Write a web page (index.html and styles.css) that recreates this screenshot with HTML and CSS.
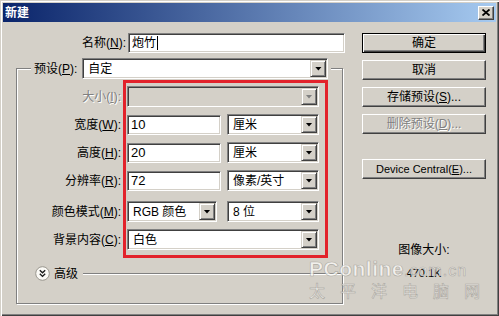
FILE: index.html
```html
<!DOCTYPE html>
<html>
<head>
    <title>新建</title>
    <link rel="stylesheet" href="styles.css">
</head>
<body>
    <div class="window">
        <div class="titlebar">
            <span class="title">新建</span>
            <span class="close">
                <svg viewBox="0 0 8 7" width="8" height="7"><path d="M0.5 0.5 L7.5 6.5 M7.5 0.5 L0.5 6.5" stroke="#000" stroke-width="1.8" fill="none"/></svg>
            </span>
        </div>
        <div class="main">
            <div class="left">
                <div class="name-row">
                    <span class="label name-label">名称(<u>N</u>):</span>
                    <div class="field name-field">炮竹<span class="caret"></span></div>
                </div>
                <fieldset class="group">
                    <legend class="preset">
                        <span class="label">预设(<u>P</u>):</span>
                        <div class="select preset-select"><span class="value">自定</span><span class="drop"></span></div>
                    </legend>
                    <div class="rows">
                        <span class="label disabled">大小(<u>I</u>):</span>
                        <div class="controls">
                            <div class="select full off"><span class="value"></span><span class="drop"></span></div>
                        </div>

                        <span class="label">宽度(<u>W</u>):</span>
                        <div class="controls">
                            <div class="field num">10</div>
                            <div class="select unit"><span class="value">厘米</span><span class="drop"></span></div>
                        </div>

                        <span class="label">高度(<u>H</u>):</span>
                        <div class="controls">
                            <div class="field num">20</div>
                            <div class="select unit"><span class="value">厘米</span><span class="drop"></span></div>
                        </div>

                        <span class="label">分辨率(<u>R</u>):</span>
                        <div class="controls">
                            <div class="field num">72</div>
                            <div class="select unit"><span class="value">像素/英寸</span><span class="drop"></span></div>
                        </div>

                        <span class="label gap-top">颜色模式(<u>M</u>):</span>
                        <div class="controls gap-top">
                            <div class="select mode"><span class="value">RGB 颜色</span><span class="drop"></span></div>
                            <div class="select unit"><span class="value">8 位</span><span class="drop"></span></div>
                        </div>

                        <span class="label">背景内容(<u>C</u>):</span>
                        <div class="controls">
                            <div class="select full"><span class="value">白色</span><span class="drop"></span></div>
                        </div>
                    </div>
                    <div class="advanced">
                        <svg class="adv-icon" viewBox="0 0 15 15" width="15" height="15">
                            <circle cx="7.5" cy="7.5" r="6.8" fill="#fbfaf6" stroke="#9a978f"/>
                            <path d="M4.8 4.2 L7.5 6.8 L10.2 4.2 M4.8 7.8 L7.5 10.4 L10.2 7.8" stroke="#1a1a1a" stroke-width="1.4" fill="none"/>
                        </svg>
                        <span class="adv-text">高级</span>
                        <span class="adv-line"></span>
                    </div>
                </fieldset>
            </div>
            <div class="right">
                <button class="btn default">确定</button>
                <button class="btn">取消</button>
                <button class="btn">存储预设(<u>S</u>)...</button>
                <button class="btn off">删除预设(<u>D</u>)...</button>
                <button class="btn latin device">Device Central(<u>E</u>)...</button>
                <div class="size-info">
                    <div class="size-title">图像大小:</div>
                    <div class="size-value">470.1K</div>
                </div>
            </div>
        </div>
        <!-- annotation drawn over the screenshot -->
        <div class="highlight"></div>
        <div class="watermark">
            <div class="wm-top">PConline<span class="wm-small">.com.cn</span></div>
            <div class="wm-bottom">太平洋电脑网</div>
        </div>
    </div>
</body>
</html>
```

FILE: styles.css
```css
body { margin: 0; font-family: "Liberation Sans", "Noto Sans CJK SC", sans-serif; font-size: 12px; color: #000; }
.window { position: relative; width: 499px; height: 316px; box-sizing: border-box; padding: 3px; background: #d4d0c8; box-shadow: inset 1px 1px #d4d0c8, inset 2px 2px #fff, inset -1px -1px #404040, inset -2px -2px #808080; overflow: hidden; }
.titlebar { height: 19px; display: flex; align-items: center; justify-content: space-between; background: linear-gradient(to right, #0a246a, #a6caf0); }
.title { color: #fff; font-weight: bold; padding-left: 2px; line-height: 14px; }
.close { width: 16px; height: 14px; margin-right: 2px; box-sizing: border-box; background: #d4d0c8; border: 1px solid; border-color: #fff #404040 #404040 #fff; box-shadow: inset -1px -1px #808080; display: flex; align-items: center; justify-content: center; }

.main { display: flex; padding-top: 11px; }
.left { width: 342px; }
.right { width: 124px; margin-left: 17px; display: flex; flex-direction: column; gap: 7px; }

.label { line-height: 14px; white-space: nowrap; }
.label u, .btn u { text-underline-offset: 1px; }
.disabled { color: #808080; text-shadow: 1px 1px #fff; }

.name-row { display: flex; align-items: center; }
.name-label { width: 123px; text-align: right; margin-right: 2px; }
.name-field { width: 217px; }
.caret { display: inline-block; width: 1px; height: 14px; background: #000; margin-left: 1px; vertical-align: middle; }

.field { height: 20px; box-sizing: border-box; background: #fff; border: 1px solid; border-color: #808080 #fff #fff #808080; box-shadow: inset 1px 1px #404040, inset -1px -1px #d4d0c8; padding: 0 3px; display: flex; align-items: center; line-height: 14px; }
.num { width: 94px; font-size: 13px; }

.select { height: 21px; box-sizing: border-box; display: flex; align-items: center; background: #fff; border: 1px solid; border-color: #808080 #fff #fff #808080; box-shadow: inset 1px 1px #404040, inset -1px -1px #d4d0c8; padding: 1px; }
.select .value { flex: 1; padding-left: 4px; line-height: 14px; white-space: nowrap; }
.drop { width: 16px; height: 100%; box-sizing: border-box; background: #d4d0c8; border: 1px solid; border-color: #d4d0c8 #404040 #404040 #d4d0c8; box-shadow: inset 1px 1px #fff, inset -1px -1px #808080; display: flex; align-items: center; justify-content: center; }
.drop::after { content: ""; width: 7px; height: 4px; background: #000; clip-path: polygon(0 0, 100% 0, 50% 100%); }
.select.off { background: #d4d0c8; }
.select.off .drop::after { background: #808080; }

.group { margin: 5px 0 0 13px; width: 327px; box-sizing: border-box; min-width: 0; padding: 0 0 22px 0; border: 1px solid #808080; box-shadow: inset 1px 1px #fff, 1px 1px #fff; }
.preset { display: flex; align-items: center; gap: 5px; margin-left: 14px; padding: 0 3px; background: #d4d0c8; }
.preset-select { width: 246px; }

.rows { display: grid; grid-template-columns: 104px 192px; column-gap: 6px; row-gap: 7px; padding-top: 7px; }
.rows .label { text-align: right; align-self: center; }
.controls { display: flex; justify-content: space-between; align-items: center; height: 21px; }
.gap-top { margin-top: 3px; }
.full { width: 192px; }
.unit { width: 92px; }
.mode { width: 90px; }

.advanced { display: flex; align-items: center; margin-top: 16px; padding-left: 18px; height: 15px; }
.adv-text { margin-left: 4px; line-height: 14px; }
.adv-line { flex: 1; height: 1px; background: #808080; box-shadow: 0 1px #fff; margin-left: 5px; }

.btn { height: 20px; width: 124px; margin: 0; padding: 0; font: inherit; color: #000; background: #d4d0c8; border: 1px solid; border-color: #fff #404040 #404040 #fff; box-shadow: inset -1px -1px #808080; line-height: 14px; }
.btn.default { border-color: #000; box-shadow: inset 1px 1px #fff, inset -1px -1px #404040, inset -2px -2px #808080; }
.btn.off { color: #808080; text-shadow: 1px 1px #fff; }
.btn.device { margin-top: 18px; font-size: 11px; }

.size-info { margin-top: 56px; text-align: center; }
.size-title { line-height: 16px; }
.size-value { line-height: 16px; margin-top: 7px; font-size: 11px; }

.highlight { position: absolute; left: 123px; top: 80px; width: 205px; height: 178px; box-sizing: border-box; border: 3px solid #e2222b; }

.watermark { position: absolute; left: 309px; top: 257px; color: rgba(252, 251, 248, 0.75); -webkit-text-stroke: 0.7px rgba(140, 137, 130, 0.6); font-family: "Liberation Sans", "Noto Sans CJK SC", sans-serif; font-weight: bold; }
.wm-top { font-size: 21px; line-height: 24px; letter-spacing: 0.5px; }
.wm-small { font-size: 16px; font-weight: normal; letter-spacing: 1px; }
.wm-bottom { font-size: 16px; line-height: 18px; letter-spacing: 15px; font-weight: normal; }
```
